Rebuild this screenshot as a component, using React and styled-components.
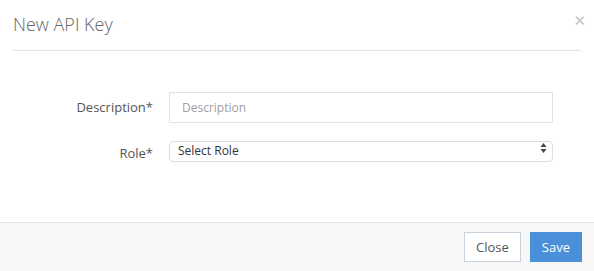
import React from 'react';
import styled, { createGlobalStyle } from 'styled-components';

const GlobalStyle = createGlobalStyle`
  html, body {
    margin: 0;
    padding: 0;
    background: #fff;
  }
  body {
    font-family: 'Open Sans', 'Liberation Sans', sans-serif;
    color: #555;
  }
`;

const Modal = styled.div`
  width: 594px;
  height: 271px;
  display: flex;
  flex-direction: column;
  background: #fff;
`;

const Header = styled.div`
  position: relative;
  margin: 0 13px;
  height: 50px;
  border-bottom: 1px solid #e3e3e3;
  display: flex;
  align-items: center;
`;

const Title = styled.h4`
  margin: 0;
  font-size: 18px;
  font-weight: 300;
  color: #666;
  line-height: 20px;
  padding-bottom: 3px;
`;

const CloseX = styled.button`
  position: absolute;
  right: -5px;
  top: 12px;
  border: 0;
  background: none;
  padding: 0;
  font-family: 'DejaVu Sans', sans-serif;
  font-size: 15px;
  font-weight: bold;
  color: #c4c4c4;
  cursor: pointer;
`;

const Body = styled.div`
  flex: 1;
  padding-top: 41px;
  display: flex;
  flex-direction: column;
  gap: 15px;
`;

const Row = styled.div`
  display: grid;
  grid-template-columns: 153px 384px;
  column-gap: 16px;
  align-items: start;
`;

const Label = styled.label`
  text-align: right;
  font-size: 13px;
  line-height: 31px;
  height: 21px;
  color: #555;
`;

const Input = styled.input`
  box-sizing: border-box;
  height: 31px;
  width: 100%;
  border: 1px solid #e2e2e2;
  padding: 0 12px;
  font-family: inherit;
  font-size: 12px;
  color: #555;
  outline: none;
  &::placeholder {
    color: #a0a0a0;
  }
`;

const SelectWrap = styled.div`
  position: relative;
  height: 21px;
`;

const Select = styled.select`
  box-sizing: border-box;
  appearance: none;
  width: 100%;
  height: 21px;
  border: 1px solid #ddd;
  border-radius: 4px;
  background: #fff;
  padding: 0 8px 2px;
  font-family: inherit;
  font-size: 12px;
  color: #333;
  outline: none;
`;

const Arrows = styled.svg`
  position: absolute;
  right: 6px;
  top: 4px;
  pointer-events: none;
`;

const Footer = styled.div`
  height: 48px;
  background: #f7f7f7;
  border-top: 1px solid #e6e6e6;
  display: flex;
  justify-content: flex-end;
  align-items: center;
  gap: 9px;
  padding: 0 12px 0 0;
`;

const Button = styled.button`
  box-sizing: border-box;
  height: 30px;
  padding: 0 11px;
  font-family: inherit;
  font-size: 13px;
  border: 1px solid ${(p) => (p.primary ? '#4a90d9' : '#c9d3de')};
  background: ${(p) => (p.primary ? '#4a90d9' : '#fff')};
  color: ${(p) => (p.primary ? '#fff' : '#555')};
  cursor: pointer;
`;

export default function App() {
  return (
    <Modal>
      <GlobalStyle />
      <Header>
        <Title>New API Key</Title>
        <CloseX aria-label="Close">✕</CloseX>
      </Header>
      <Body>
        <Row>
          <Label>Description*</Label>
          <Input placeholder="Description" />
        </Row>
        <Row>
          <Label>Role*</Label>
          <SelectWrap>
            <Select defaultValue="">
              <option value="">Select Role</option>
            </Select>
            <Arrows width="7" height="12" viewBox="0 0 7 12">
              <path d="M3.5 1 L6.5 5 L0.5 5 Z" fill="#444" />
              <path d="M3.5 11 L6.5 7 L0.5 7 Z" fill="#444" />
            </Arrows>
          </SelectWrap>
        </Row>
      </Body>
      <Footer>
        <Button>Close</Button>
        <Button primary>Save</Button>
      </Footer>
    </Modal>
  );
}
